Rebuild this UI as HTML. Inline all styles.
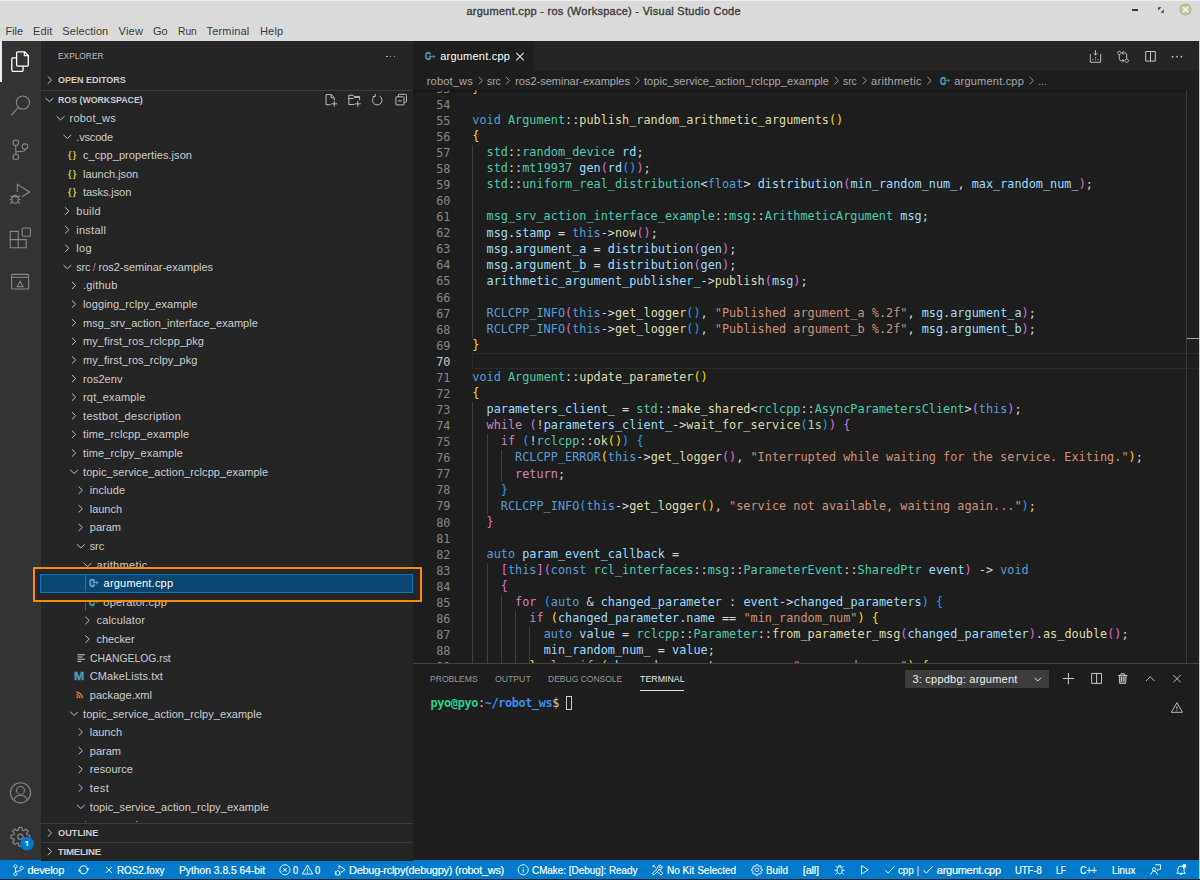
<!DOCTYPE html>
<html lang="en"><head><meta charset="utf-8"><title>argument.cpp - ros (Workspace) - Visual Studio Code</title>
<style>
html,body{margin:0;padding:0;}
body{width:1200px;height:880px;position:relative;overflow:hidden;background:#1e1e1e;
 font-family:"Liberation Sans",sans-serif;font-size:11px;color:#ccc;}
.a{position:absolute;display:block;}
.t{position:absolute;white-space:pre;display:block;}
.c{position:absolute;left:0;white-space:pre;display:block;font-family:"DejaVu Sans Mono","Liberation Mono",monospace;}
svg{overflow:visible}
</style></head><body>
<div class="a" style="left:0.00px;top:0.00px;width:1200.00px;height:41.30px;background:#dadada;"></div>
<div class="a" style="left:0.00px;top:0.00px;width:1200.00px;height:1.00px;background:#ececec;"></div>
<span class="t" style="top:3.30px;line-height:16px;font-size:11px;color:#3d3d3d;left:466.40px;letter-spacing:0.271px;-webkit-text-stroke:0.35px #3d3d3d;">argument.cpp - ros (Workspace) - Visual Studio Code</span>
<span class="t" style="top:22.90px;line-height:16px;font-size:11px;color:#3a3a3a;left:5.50px;letter-spacing:-0.059px;">File</span>
<span class="t" style="top:22.90px;line-height:16px;font-size:11px;color:#3a3a3a;left:33.00px;letter-spacing:0.133px;">Edit</span>
<span class="t" style="top:22.90px;line-height:16px;font-size:11px;color:#3a3a3a;left:62.30px;letter-spacing:0.082px;">Selection</span>
<span class="t" style="top:22.90px;line-height:16px;font-size:11px;color:#3a3a3a;left:118.60px;letter-spacing:0.211px;">View</span>
<span class="t" style="top:22.90px;line-height:16px;font-size:11px;color:#3a3a3a;left:153.00px;letter-spacing:-0.094px;">Go</span>
<span class="t" style="top:22.90px;line-height:16px;font-size:11px;color:#3a3a3a;left:177.80px;transform:scaleX(0.9313);transform-origin:0 50%;">Run</span>
<span class="t" style="top:22.90px;line-height:16px;font-size:11px;color:#3a3a3a;left:206.50px;letter-spacing:0.178px;">Terminal</span>
<span class="t" style="top:22.90px;line-height:16px;font-size:11px;color:#3a3a3a;left:260.00px;letter-spacing:0.169px;">Help</span>
<div class="a" style="left:1131.90px;top:9.00px;width:5.80px;height:1.90px;background:#3a3a3a;"></div>
<svg class="a" style="left:1157.50px;top:6.50px;" width="6.00" height="6.00" viewBox="0 0 6 6"><path d="M0.2 0.2h3.2L0.2 3.4zM5.8 5.8H2.6l3.2-3.2z" fill="#3a3a3a"/></svg>
<svg class="a" style="left:1179.00px;top:3.30px;" width="13.00" height="13.00" viewBox="0 0 13 13"><circle cx="6.5" cy="6.5" r="6.0" fill="#b4b98c"/><circle cx="6.5" cy="6.5" r="4.6" fill="#c3caa4"/><path d="M4.3 4.3l4.4 4.4M8.7 4.3l-4.4 4.4" stroke="#f4f4f4" stroke-width="1.7" stroke-linecap="round"/></svg>
<div class="a" style="left:0.00px;top:41.30px;width:40.80px;height:819.30px;background:#333333;"></div>
<div class="a" style="left:40.80px;top:41.30px;width:372.40px;height:819.30px;background:#252526;"></div>
<div class="a" style="left:413.20px;top:41.30px;width:786.80px;height:29.40px;background:#252526;"></div>
<div class="a" style="left:413.20px;top:41.30px;width:120.60px;height:29.40px;background:#1e1e1e;"></div>
<div class="a" style="left:0.00px;top:41.30px;width:1.90px;height:40.30px;background:#ececec;"></div>
<div class="a" style="left:1198.70px;top:41.30px;width:1.30px;height:838.00px;background:#cbcbcb;"></div>
<div class="a" style="left:0.00px;top:860.35px;width:1198.70px;height:18.55px;background:#007acc;"></div>
<div class="a" style="left:0.00px;top:878.90px;width:1198.70px;height:1.10px;background:#1f1f1f;"></div>
<span class="t" style="top:48.40px;line-height:16px;font-size:9.6px;color:#bbbbbb;left:57.80px;transform:scaleX(0.8706);transform-origin:0 50%;">EXPLORER</span>
<div class="a" style="left:386.30px;top:55.60px;width:1.50px;height:1.50px;background:#c5c5c5;border-radius:1px;"></div>
<div class="a" style="left:389.90px;top:55.60px;width:1.50px;height:1.50px;background:#c5c5c5;border-radius:1px;"></div>
<div class="a" style="left:393.50px;top:55.60px;width:1.50px;height:1.50px;background:#c5c5c5;border-radius:1px;"></div>
<span class="t" style="top:72.10px;line-height:16px;font-size:9.7px;color:#cccccc;left:57.80px;font-weight:700;transform:scaleX(0.9270);transform-origin:0 50%;">OPEN EDITORS</span>
<div class="a" style="left:40.80px;top:89.70px;width:372.40px;height:0.90px;background:#3c3c3d;"></div>
<span class="t" style="top:91.80px;line-height:16px;font-size:9.7px;color:#cccccc;left:57.80px;font-weight:700;transform:scaleX(0.9062);transform-origin:0 50%;">ROS (WORKSPACE)</span>
<div class="a" style="left:40.8px;top:108.5px;width:372.4px;height:713.9px;overflow:hidden">
<div class="a" style="left:-40.8px;top:-108.5px;width:1200px;height:880px">
<svg class="a" style="left:0;top:0" width="1200" height="880" viewBox="0 0 1200 880">
<path d="M56.70 116.30L60.60 119.90L64.50 116.30" fill="none" stroke="#bdbdbd" stroke-width="1.0"/>
<path d="M63.46 134.91L67.36 138.51L71.26 134.91" fill="none" stroke="#bdbdbd" stroke-width="1.0"/>
<path d="M65.11 207.35L68.91 211.05L65.11 214.75" fill="none" stroke="#bdbdbd" stroke-width="1.0"/>
<path d="M65.11 225.96L68.91 229.66L65.11 233.36" fill="none" stroke="#bdbdbd" stroke-width="1.0"/>
<path d="M65.11 244.57L68.91 248.27L65.11 251.97" fill="none" stroke="#bdbdbd" stroke-width="1.0"/>
<path d="M63.46 265.18L67.36 268.78L71.26 265.18" fill="none" stroke="#bdbdbd" stroke-width="1.0"/>
<path d="M71.87 281.79L75.67 285.49L71.87 289.19" fill="none" stroke="#bdbdbd" stroke-width="1.0"/>
<path d="M71.87 300.40L75.67 304.10L71.87 307.80" fill="none" stroke="#bdbdbd" stroke-width="1.0"/>
<path d="M71.87 319.01L75.67 322.71L71.87 326.41" fill="none" stroke="#bdbdbd" stroke-width="1.0"/>
<path d="M71.87 337.62L75.67 341.32L71.87 345.02" fill="none" stroke="#bdbdbd" stroke-width="1.0"/>
<path d="M71.87 356.23L75.67 359.93L71.87 363.63" fill="none" stroke="#bdbdbd" stroke-width="1.0"/>
<path d="M71.87 374.84L75.67 378.54L71.87 382.24" fill="none" stroke="#bdbdbd" stroke-width="1.0"/>
<path d="M71.87 393.45L75.67 397.15L71.87 400.85" fill="none" stroke="#bdbdbd" stroke-width="1.0"/>
<path d="M71.87 412.06L75.67 415.76L71.87 419.46" fill="none" stroke="#bdbdbd" stroke-width="1.0"/>
<path d="M71.87 430.67L75.67 434.37L71.87 438.07" fill="none" stroke="#bdbdbd" stroke-width="1.0"/>
<path d="M71.87 449.28L75.67 452.98L71.87 456.68" fill="none" stroke="#bdbdbd" stroke-width="1.0"/>
<path d="M70.22 469.89L74.12 473.49L78.02 469.89" fill="none" stroke="#bdbdbd" stroke-width="1.0"/>
<path d="M78.63 486.50L82.43 490.20L78.63 493.90" fill="none" stroke="#bdbdbd" stroke-width="1.0"/>
<path d="M78.63 505.11L82.43 508.81L78.63 512.51" fill="none" stroke="#bdbdbd" stroke-width="1.0"/>
<path d="M78.63 523.72L82.43 527.42L78.63 531.12" fill="none" stroke="#bdbdbd" stroke-width="1.0"/>
<path d="M76.98 544.33L80.88 547.93L84.78 544.33" fill="none" stroke="#bdbdbd" stroke-width="1.0"/>
<path d="M83.74 562.94L87.64 566.54L91.54 562.94" fill="none" stroke="#bdbdbd" stroke-width="1.0"/>
<path d="M85.39 616.77L89.19 620.47L85.39 624.17" fill="none" stroke="#bdbdbd" stroke-width="1.0"/>
<path d="M85.39 635.38L89.19 639.08L85.39 642.78" fill="none" stroke="#bdbdbd" stroke-width="1.0"/>
<path d="M70.22 711.82L74.12 715.42L78.02 711.82" fill="none" stroke="#bdbdbd" stroke-width="1.0"/>
<path d="M78.63 728.43L82.43 732.13L78.63 735.83" fill="none" stroke="#bdbdbd" stroke-width="1.0"/>
<path d="M78.63 747.04L82.43 750.74L78.63 754.44" fill="none" stroke="#bdbdbd" stroke-width="1.0"/>
<path d="M78.63 765.65L82.43 769.35L78.63 773.05" fill="none" stroke="#bdbdbd" stroke-width="1.0"/>
<path d="M78.63 784.26L82.43 787.96L78.63 791.66" fill="none" stroke="#bdbdbd" stroke-width="1.0"/>
<path d="M76.98 804.87L80.88 808.47L84.78 804.87" fill="none" stroke="#bdbdbd" stroke-width="1.0"/>
<path d="M85.39 821.48L89.19 825.18L85.39 828.88" fill="none" stroke="#bdbdbd" stroke-width="1.0"/>
</svg>
<span class="t" style="top:110.00px;line-height:16px;font-size:11px;color:#cccccc;left:69.50px;letter-spacing:0.232px;">robot_ws</span>
<span class="t" style="top:128.61px;line-height:16px;font-size:11px;color:#cccccc;left:76.26px;letter-spacing:-0.169px;">.vscode</span>
<span class="t" style="top:147.22px;line-height:16px;font-size:11px;color:#cccccc;left:83.02px;letter-spacing:0.065px;">c_cpp_properties.json</span>
<span class="t" style="top:165.83px;line-height:16px;font-size:11px;color:#cccccc;left:83.02px;letter-spacing:-0.043px;">launch.json</span>
<span class="t" style="top:184.44px;line-height:16px;font-size:11px;color:#cccccc;left:83.02px;letter-spacing:-0.074px;">tasks.json</span>
<span class="t" style="top:203.05px;line-height:16px;font-size:11px;color:#cccccc;left:76.26px;letter-spacing:0.258px;">build</span>
<span class="t" style="top:221.66px;line-height:16px;font-size:11px;color:#cccccc;left:76.26px;letter-spacing:0.259px;">install</span>
<span class="t" style="top:240.27px;line-height:16px;font-size:11px;color:#cccccc;left:76.26px;letter-spacing:0.284px;">log</span>
<span class="t" style="top:258.88px;line-height:16px;font-size:11px;color:#cccccc;left:76.26px;letter-spacing:-0.224px;">src</span>
<span class="t" style="top:258.88px;line-height:16px;font-size:11px;color:#8a8a8a;left:92.76px;">/</span>
<span class="t" style="top:258.88px;line-height:16px;font-size:11px;color:#cccccc;left:98.56px;letter-spacing:-0.024px;">ros2-seminar-examples</span>
<span class="t" style="top:277.49px;line-height:16px;font-size:11px;color:#cccccc;left:83.02px;letter-spacing:0.207px;">.github</span>
<span class="t" style="top:296.10px;line-height:16px;font-size:11px;color:#cccccc;left:83.02px;letter-spacing:0.094px;">logging_rclpy_example</span>
<span class="t" style="top:314.71px;line-height:16px;font-size:11px;color:#cccccc;left:83.02px;letter-spacing:0.060px;">msg_srv_action_interface_example</span>
<span class="t" style="top:333.32px;line-height:16px;font-size:11px;color:#cccccc;left:83.02px;letter-spacing:0.077px;">my_first_ros_rclcpp_pkg</span>
<span class="t" style="top:351.93px;line-height:16px;font-size:11px;color:#cccccc;left:83.02px;letter-spacing:0.063px;">my_first_ros_rclpy_pkg</span>
<span class="t" style="top:370.54px;line-height:16px;font-size:11px;color:#cccccc;left:83.02px;letter-spacing:0.048px;">ros2env</span>
<span class="t" style="top:389.15px;line-height:16px;font-size:11px;color:#cccccc;left:83.02px;letter-spacing:0.176px;">rqt_example</span>
<span class="t" style="top:407.76px;line-height:16px;font-size:11px;color:#cccccc;left:83.02px;letter-spacing:0.307px;">testbot_description</span>
<span class="t" style="top:426.37px;line-height:16px;font-size:11px;color:#cccccc;left:83.02px;letter-spacing:0.118px;">time_rclcpp_example</span>
<span class="t" style="top:444.98px;line-height:16px;font-size:11px;color:#cccccc;left:83.02px;letter-spacing:0.120px;">time_rclpy_example</span>
<span class="t" style="top:463.59px;line-height:16px;font-size:11px;color:#cccccc;left:83.02px;letter-spacing:0.070px;">topic_service_action_rclcpp_example</span>
<span class="t" style="top:482.20px;line-height:16px;font-size:11px;color:#cccccc;left:89.78px;letter-spacing:0.080px;">include</span>
<span class="t" style="top:500.81px;line-height:16px;font-size:11px;color:#cccccc;left:89.78px;letter-spacing:-0.034px;">launch</span>
<span class="t" style="top:519.42px;line-height:16px;font-size:11px;color:#cccccc;left:89.78px;letter-spacing:0.006px;">param</span>
<span class="t" style="top:538.03px;line-height:16px;font-size:11px;color:#cccccc;left:89.78px;letter-spacing:-0.151px;">src</span>
<span class="t" style="top:556.64px;line-height:16px;font-size:11px;color:#cccccc;left:96.54px;letter-spacing:0.327px;">arithmetic</span>
<span class="t" style="top:593.86px;line-height:16px;font-size:11px;color:#cccccc;left:103.30px;letter-spacing:0.212px;">operator.cpp</span>
<span class="t" style="top:612.47px;line-height:16px;font-size:11px;color:#cccccc;left:96.54px;letter-spacing:0.138px;">calculator</span>
<span class="t" style="top:631.08px;line-height:16px;font-size:11px;color:#cccccc;left:96.54px;letter-spacing:-0.082px;">checker</span>
<span class="t" style="top:649.69px;line-height:16px;font-size:11px;color:#cccccc;left:89.78px;transform:scaleX(0.9432);transform-origin:0 50%;">CHANGELOG.rst</span>
<span class="t" style="top:668.30px;line-height:16px;font-size:11px;color:#cccccc;left:89.78px;letter-spacing:0.077px;">CMakeLists.txt</span>
<span class="t" style="top:686.91px;line-height:16px;font-size:11px;color:#cccccc;left:89.78px;letter-spacing:0.041px;">package.xml</span>
<span class="t" style="top:705.52px;line-height:16px;font-size:11px;color:#cccccc;left:83.02px;letter-spacing:0.067px;">topic_service_action_rclpy_example</span>
<span class="t" style="top:724.13px;line-height:16px;font-size:11px;color:#cccccc;left:89.78px;letter-spacing:-0.034px;">launch</span>
<span class="t" style="top:742.74px;line-height:16px;font-size:11px;color:#cccccc;left:89.78px;letter-spacing:0.006px;">param</span>
<span class="t" style="top:761.35px;line-height:16px;font-size:11px;color:#cccccc;left:89.78px;letter-spacing:0.053px;">resource</span>
<span class="t" style="top:779.96px;line-height:16px;font-size:11px;color:#cccccc;left:89.78px;letter-spacing:0.421px;">test</span>
<span class="t" style="top:798.57px;line-height:16px;font-size:11px;color:#cccccc;left:89.78px;letter-spacing:0.074px;">topic_service_action_rclpy_example</span>
<span class="t" style="top:817.18px;line-height:16px;font-size:11px;color:#cccccc;left:96.54px;transform:scaleX(0.9420);transform-origin:0 50%;">__pycache__</span>
</div></div>
<div class="a" style="left:40.80px;top:822.40px;width:372.40px;height:38.20px;background:#252526;"></div>
<div class="a" style="left:40.80px;top:822.60px;width:372.40px;height:0.90px;background:#3c3c3d;"></div>
<span class="t" style="top:825.00px;line-height:16px;font-size:9.7px;color:#cccccc;left:57.80px;font-weight:700;transform:scaleX(0.9479);transform-origin:0 50%;">OUTLINE</span>
<div class="a" style="left:40.80px;top:841.60px;width:372.40px;height:0.90px;background:#3c3c3d;"></div>
<span class="t" style="top:843.50px;line-height:16px;font-size:9.7px;color:#cccccc;left:57.80px;font-weight:700;letter-spacing:-0.252px;">TIMELINE</span>
<svg class="a" style="left:0;top:0" width="1200" height="880" viewBox="0 0 1200 880">
<path d="M47.75 76.40L51.55 80.10L47.75 83.80" fill="none" stroke="#bdbdbd" stroke-width="1.0"/>
<path d="M45.60 98.10L49.50 101.70L53.40 98.10" fill="none" stroke="#bdbdbd" stroke-width="1.0"/>
<path d="M47.75 829.30L51.55 833.00L47.75 836.70" fill="none" stroke="#bdbdbd" stroke-width="1.0"/>
<path d="M47.75 847.80L51.55 851.50L47.75 855.20" fill="none" stroke="#bdbdbd" stroke-width="1.0"/>
</svg>
<span class="t" style="top:48.00px;line-height:16px;font-size:11px;color:#ffffff;left:440.20px;letter-spacing:0.228px;">argument.cpp</span>
<span class="t" style="top:72.80px;line-height:16px;font-size:11px;color:#a9a9a9;left:426.70px;letter-spacing:0.207px;">robot_ws</span>
<span class="t" style="top:72.80px;line-height:16px;font-size:11px;color:#a9a9a9;left:487.00px;transform:scaleX(0.9338);transform-origin:0 50%;">src</span>
<span class="t" style="top:72.80px;line-height:16px;font-size:11px;color:#a9a9a9;left:515.20px;letter-spacing:-0.007px;">ros2-seminar-examples</span>
<span class="t" style="top:72.80px;line-height:16px;font-size:11px;color:#a9a9a9;left:644.00px;letter-spacing:0.062px;">topic_service_action_rclcpp_example</span>
<span class="t" style="top:72.80px;line-height:16px;font-size:11px;color:#a9a9a9;left:843.30px;transform:scaleX(0.9338);transform-origin:0 50%;">src</span>
<span class="t" style="top:72.80px;line-height:16px;font-size:11px;color:#a9a9a9;left:871.00px;letter-spacing:0.301px;">arithmetic</span>
<span class="t" style="top:72.80px;line-height:16px;font-size:11px;color:#a9a9a9;left:954.30px;letter-spacing:0.203px;">argument.cpp</span>
<span class="t" style="top:72.80px;line-height:16px;font-size:11px;color:#a9a9a9;left:1038.00px;transform:scaleX(0.8182);transform-origin:0 50%;">…</span>
<svg class="a" style="left:0;top:0" width="1200" height="880" viewBox="0 0 1200 880">
<path d="M478.6 76.9L482.4 80.6L478.6 84.3" fill="none" stroke="#a0a0a0" stroke-width="0.9"/>
<path d="M505.9 76.9L509.7 80.6L505.9 84.3" fill="none" stroke="#a0a0a0" stroke-width="0.9"/>
<path d="M635.6 76.9L639.4 80.6L635.6 84.3" fill="none" stroke="#a0a0a0" stroke-width="0.9"/>
<path d="M834.6 76.9L838.4 80.6L834.6 84.3" fill="none" stroke="#a0a0a0" stroke-width="0.9"/>
<path d="M862.6 76.9L866.4 80.6L862.6 84.3" fill="none" stroke="#a0a0a0" stroke-width="0.9"/>
<path d="M927.3 76.9L931.1 80.6L927.3 84.3" fill="none" stroke="#a0a0a0" stroke-width="0.9"/>
<path d="M1029.6 76.9L1033.4 80.6L1029.6 84.3" fill="none" stroke="#a0a0a0" stroke-width="0.9"/>
</svg>
<div class="a" style="left:413.2px;top:89.9px;width:785.4px;height:573.1px;overflow:hidden;background:#1e1e1e">
<div class="a" style="left:-413.2px;top:-89.9px;width:1200px;height:880px">
<div class="a" style="left:472.30px;top:352.82px;width:726.40px;height:16.67px;box-sizing:border-box;border:1.3px solid #2b2b2b;border-right:0;"></div>
<div class="a" style="left:472.40px;top:144.94px;width:0.85px;height:192.82px;background:#404040;"></div>
<div class="a" style="left:472.40px;top:402.02px;width:0.85px;height:273.16px;background:#404040;"></div>
<div class="a" style="left:486.67px;top:434.16px;width:0.85px;height:80.34px;background:#404040;"></div>
<div class="a" style="left:500.93px;top:450.23px;width:0.85px;height:32.14px;background:#404040;"></div>
<div class="a" style="left:486.67px;top:562.70px;width:0.85px;height:112.48px;background:#404040;"></div>
<div class="a" style="left:500.93px;top:594.84px;width:0.85px;height:80.34px;background:#404040;"></div>
<div class="a" style="left:515.20px;top:610.91px;width:0.85px;height:64.27px;background:#404040;"></div>
<div class="a" style="left:529.46px;top:626.98px;width:0.85px;height:48.20px;background:#404040;"></div>
<span class="c" style="left:436.2px;top:80.66px;line-height:16.068px;font-size:11.83px;color:#858585">53</span>
<span class="c k0" style="left:472.3px;top:79.91px"><i class="xb1">}</i></span>
<span class="c" style="left:436.2px;top:96.73px;line-height:16.068px;font-size:11.83px;color:#858585">54</span>
<span class="c" style="left:436.2px;top:112.80px;line-height:16.068px;font-size:11.83px;color:#858585">55</span>
<span class="c k0" style="left:472.3px;top:112.05px"><i class="xk">void</i> <i class="xt">Argument</i>::<i class="xf">publish_random_arithmetic_arguments</i><i class="xb1">()</i></span>
<span class="c" style="left:436.2px;top:128.87px;line-height:16.068px;font-size:11.83px;color:#858585">56</span>
<span class="c k0" style="left:472.3px;top:128.12px"><i class="xb1">{</i></span>
<span class="c" style="left:436.2px;top:144.94px;line-height:16.068px;font-size:11.83px;color:#858585">57</span>
<span class="c k0" style="left:472.3px;top:144.19px">  <i class="xt">std</i>::<i class="xt">random_device</i> <i class="xv">rd</i>;</span>
<span class="c" style="left:436.2px;top:161.00px;line-height:16.068px;font-size:11.83px;color:#858585">58</span>
<span class="c k0" style="left:472.3px;top:160.25px">  <i class="xt">std</i>::<i class="xt">mt19937</i> <i class="xv">gen</i><i class="xb2">(</i><i class="xv">rd</i><i class="xb3">()</i><i class="xb2">)</i>;</span>
<span class="c" style="left:436.2px;top:177.07px;line-height:16.068px;font-size:11.83px;color:#858585">59</span>
<span class="c k0" style="left:472.3px;top:176.32px">  <i class="xt">std</i>::<i class="xt">uniform_real_distribution</i>&lt;<i class="xk">float</i>&gt; <i class="xv">distribution</i><i class="xb2">(</i><i class="xv">min_random_num_</i>, <i class="xv">max_random_num_</i><i class="xb2">)</i>;</span>
<span class="c" style="left:436.2px;top:193.14px;line-height:16.068px;font-size:11.83px;color:#858585">60</span>
<span class="c" style="left:436.2px;top:209.21px;line-height:16.068px;font-size:11.83px;color:#858585">61</span>
<span class="c k0" style="left:472.3px;top:208.46px">  <i class="xt">msg_srv_action_interface_example</i>::<i class="xt">msg</i>::<i class="xt">ArithmeticArgument</i> <i class="xv">msg</i>;</span>
<span class="c" style="left:436.2px;top:225.28px;line-height:16.068px;font-size:11.83px;color:#858585">62</span>
<span class="c k0" style="left:472.3px;top:224.53px">  <i class="xv">msg</i>.<i class="xv">stamp</i> = <i class="xk">this</i>-&gt;<i class="xf">now</i><i class="xb2">()</i>;</span>
<span class="c" style="left:436.2px;top:241.34px;line-height:16.068px;font-size:11.83px;color:#858585">63</span>
<span class="c k0" style="left:472.3px;top:240.59px">  <i class="xv">msg</i>.<i class="xv">argument_a</i> = <i class="xv">distribution</i><i class="xb2">(</i><i class="xv">gen</i><i class="xb2">)</i>;</span>
<span class="c" style="left:436.2px;top:257.41px;line-height:16.068px;font-size:11.83px;color:#858585">64</span>
<span class="c k0" style="left:472.3px;top:256.66px">  <i class="xv">msg</i>.<i class="xv">argument_b</i> = <i class="xv">distribution</i><i class="xb2">(</i><i class="xv">gen</i><i class="xb2">)</i>;</span>
<span class="c" style="left:436.2px;top:273.48px;line-height:16.068px;font-size:11.83px;color:#858585">65</span>
<span class="c k0" style="left:472.3px;top:272.73px">  <i class="xv">arithmetic_argument_publisher_</i>-&gt;<i class="xf">publish</i><i class="xb2">(</i><i class="xv">msg</i><i class="xb2">)</i>;</span>
<span class="c" style="left:436.2px;top:289.55px;line-height:16.068px;font-size:11.83px;color:#858585">66</span>
<span class="c" style="left:436.2px;top:305.62px;line-height:16.068px;font-size:11.83px;color:#858585">67</span>
<span class="c k0" style="left:472.3px;top:304.87px">  <i class="xk">RCLCPP_INFO</i><i class="xb2">(</i><i class="xk">this</i>-&gt;<i class="xf">get_logger</i><i class="xb3">()</i>, <i class="xs">"Published argument_a %.2f"</i>, <i class="xv">msg</i>.<i class="xv">argument_a</i><i class="xb2">)</i>;</span>
<span class="c" style="left:436.2px;top:321.68px;line-height:16.068px;font-size:11.83px;color:#858585">68</span>
<span class="c k0" style="left:472.3px;top:320.93px">  <i class="xk">RCLCPP_INFO</i><i class="xb2">(</i><i class="xk">this</i>-&gt;<i class="xf">get_logger</i><i class="xb3">()</i>, <i class="xs">"Published argument_b %.2f"</i>, <i class="xv">msg</i>.<i class="xv">argument_b</i><i class="xb2">)</i>;</span>
<span class="c" style="left:436.2px;top:337.75px;line-height:16.068px;font-size:11.83px;color:#858585">69</span>
<span class="c k0" style="left:472.3px;top:337.00px"><i class="xb1">}</i></span>
<span class="c" style="left:436.2px;top:353.82px;line-height:16.068px;font-size:11.83px;color:#c6c6c6">70</span>
<span class="c" style="left:436.2px;top:369.89px;line-height:16.068px;font-size:11.83px;color:#858585">71</span>
<span class="c k0" style="left:472.3px;top:369.14px"><i class="xk">void</i> <i class="xt">Argument</i>::<i class="xf">update_parameter</i><i class="xb1">()</i></span>
<span class="c" style="left:436.2px;top:385.96px;line-height:16.068px;font-size:11.83px;color:#858585">72</span>
<span class="c k0" style="left:472.3px;top:385.21px"><i class="xb1">{</i></span>
<span class="c" style="left:436.2px;top:402.02px;line-height:16.068px;font-size:11.83px;color:#858585">73</span>
<span class="c k0" style="left:472.3px;top:401.27px">  <i class="xv">parameters_client_</i> = <i class="xt">std</i>::<i class="xf">make_shared</i>&lt;<i class="xt">rclcpp</i>::<i class="xt">AsyncParametersClient</i>&gt;<i class="xb2">(</i><i class="xk">this</i><i class="xb2">)</i>;</span>
<span class="c" style="left:436.2px;top:418.09px;line-height:16.068px;font-size:11.83px;color:#858585">74</span>
<span class="c k0" style="left:472.3px;top:417.34px">  <i class="xc">while</i> <i class="xb2">(</i>!<i class="xv">parameters_client_</i>-&gt;<i class="xf">wait_for_service</i><i class="xb3">(</i><i class="xn">1s</i><i class="xb3">)</i><i class="xb2">)</i> <i class="xb2">{</i></span>
<span class="c" style="left:436.2px;top:434.16px;line-height:16.068px;font-size:11.83px;color:#858585">75</span>
<span class="c k0" style="left:472.3px;top:433.41px">    <i class="xc">if</i> <i class="xb3">(</i>!<i class="xt">rclcpp</i>::<i class="xf">ok</i><i class="xb1">()</i><i class="xb3">)</i> <i class="xb3">{</i></span>
<span class="c" style="left:436.2px;top:450.23px;line-height:16.068px;font-size:11.83px;color:#858585">76</span>
<span class="c k0" style="left:472.3px;top:449.48px">      <i class="xk">RCLCPP_ERROR</i><i class="xb1">(</i><i class="xk">this</i>-&gt;<i class="xf">get_logger</i><i class="xb2">()</i>, <i class="xs">"Interrupted while waiting for the service. Exiting."</i><i class="xb1">)</i>;</span>
<span class="c" style="left:436.2px;top:466.30px;line-height:16.068px;font-size:11.83px;color:#858585">77</span>
<span class="c k0" style="left:472.3px;top:465.55px">      <i class="xc">return</i>;</span>
<span class="c" style="left:436.2px;top:482.36px;line-height:16.068px;font-size:11.83px;color:#858585">78</span>
<span class="c k0" style="left:472.3px;top:481.61px">    <i class="xb3">}</i></span>
<span class="c" style="left:436.2px;top:498.43px;line-height:16.068px;font-size:11.83px;color:#858585">79</span>
<span class="c k0" style="left:472.3px;top:497.68px">    <i class="xk">RCLCPP_INFO</i><i class="xb3">(</i><i class="xk">this</i>-&gt;<i class="xf">get_logger</i><i class="xb1">()</i>, <i class="xs">"service not available, waiting again..."</i><i class="xb3">)</i>;</span>
<span class="c" style="left:436.2px;top:514.50px;line-height:16.068px;font-size:11.83px;color:#858585">80</span>
<span class="c k0" style="left:472.3px;top:513.75px">  <i class="xb2">}</i></span>
<span class="c" style="left:436.2px;top:530.57px;line-height:16.068px;font-size:11.83px;color:#858585">81</span>
<span class="c" style="left:436.2px;top:546.64px;line-height:16.068px;font-size:11.83px;color:#858585">82</span>
<span class="c k0" style="left:472.3px;top:545.89px">  <i class="xk">auto</i> <i class="xv">param_event_callback</i> =</span>
<span class="c" style="left:436.2px;top:562.70px;line-height:16.068px;font-size:11.83px;color:#858585">83</span>
<span class="c k0" style="left:472.3px;top:561.95px">    <i class="xb2">[</i><i class="xk">this</i><i class="xb2">]</i><i class="xb2">(</i><i class="xk">const</i> <i class="xt">rcl_interfaces</i>::<i class="xt">msg</i>::<i class="xt">ParameterEvent</i>::<i class="xt">SharedPtr</i> <i class="xv">event</i><i class="xb2">)</i> -&gt; <i class="xk">void</i></span>
<span class="c" style="left:436.2px;top:578.77px;line-height:16.068px;font-size:11.83px;color:#858585">84</span>
<span class="c k0" style="left:472.3px;top:578.02px">    <i class="xb2">{</i></span>
<span class="c" style="left:436.2px;top:594.84px;line-height:16.068px;font-size:11.83px;color:#858585">85</span>
<span class="c k0" style="left:472.3px;top:594.09px">      <i class="xc">for</i> <i class="xb3">(</i><i class="xk">auto</i> &amp; <i class="xv">changed_parameter</i> : <i class="xv">event</i>-&gt;<i class="xv">changed_parameters</i><i class="xb3">)</i> <i class="xb3">{</i></span>
<span class="c" style="left:436.2px;top:610.91px;line-height:16.068px;font-size:11.83px;color:#858585">86</span>
<span class="c k0" style="left:472.3px;top:610.16px">        <i class="xc">if</i> <i class="xb1">(</i><i class="xv">changed_parameter</i>.<i class="xv">name</i> == <i class="xs">"min_random_num"</i><i class="xb1">)</i> <i class="xb1">{</i></span>
<span class="c" style="left:436.2px;top:626.98px;line-height:16.068px;font-size:11.83px;color:#858585">87</span>
<span class="c k0" style="left:472.3px;top:626.23px">          <i class="xk">auto</i> <i class="xv">value</i> = <i class="xt">rclcpp</i>::<i class="xt">Parameter</i>::<i class="xf">from_parameter_msg</i><i class="xb2">(</i><i class="xv">changed_parameter</i><i class="xb2">)</i>.<i class="xf">as_double</i><i class="xb2">()</i>;</span>
<span class="c" style="left:436.2px;top:643.04px;line-height:16.068px;font-size:11.83px;color:#858585">88</span>
<span class="c k0" style="left:472.3px;top:642.29px">          <i class="xv">min_random_num_</i> = <i class="xv">value</i>;</span>
<span class="c" style="left:436.2px;top:659.11px;line-height:16.068px;font-size:11.83px;color:#858585">89</span>
<span class="c k0" style="left:472.3px;top:658.36px">        <i class="xb1">}</i> <i class="xc">else</i> <i class="xc">if</i> <i class="xb1">(</i><i class="xv">changed_parameter</i>.<i class="xv">name</i> == <i class="xs">"max_random_num"</i><i class="xb1">)</i> <i class="xb1">{</i></span>
<div class="a" style="left:413.20px;top:89.90px;width:773.00px;height:3.00px;background:linear-gradient(#00000070,#00000000);"></div>
<div class="a" style="left:1186.20px;top:89.90px;width:0.90px;height:573.10px;background:#3a3a3a;"></div>
<div class="a" style="left:1187.30px;top:337.60px;width:11.30px;height:1.50px;background:#a8a8a8;"></div>
</div></div>
<style>.k0{color:#d4d4d4;font-size:11.83px;line-height:16.068px;letter-spacing:0.0114px;}.k0 i{font-style:normal}.xk{color:#569cd6}.xt{color:#4ec9b0}.xf{color:#dcdcaa}.xv{color:#9cdcfe}.xs{color:#ce9178}.xc{color:#c586c0}.xn{color:#b5cea8}.xb1{color:#ffd700}.xb2{color:#da70d6}.xb3{color:#179fff}</style>
<div class="a" style="left:413.20px;top:662.90px;width:785.40px;height:1.20px;background:#414141;"></div>
<span class="t" style="top:670.60px;line-height:16px;font-size:9.8px;color:#969696;left:430.00px;transform:scaleX(0.8760);transform-origin:0 50%;">PROBLEMS</span>
<span class="t" style="top:670.60px;line-height:16px;font-size:9.8px;color:#969696;left:495.00px;transform:scaleX(0.8863);transform-origin:0 50%;">OUTPUT</span>
<span class="t" style="top:670.60px;line-height:16px;font-size:9.8px;color:#969696;left:547.70px;transform:scaleX(0.8692);transform-origin:0 50%;">DEBUG CONSOLE</span>
<span class="t" style="top:670.60px;line-height:16px;font-size:9.8px;color:#e7e7e7;left:639.70px;transform:scaleX(0.9002);transform-origin:0 50%;">TERMINAL</span>
<div class="a" style="left:639.70px;top:690.30px;width:44.80px;height:0.90px;background:#e0e0e0;"></div>
<div class="a" style="left:905.00px;top:669.80px;width:143.80px;height:17.80px;background:#3c3c3c;"></div>
<span class="t" style="top:670.60px;line-height:16px;font-size:11px;color:#f0f0f0;left:912.50px;letter-spacing:0.215px;">3: cppdbg: argument</span>
<span class="c" style="left:430.6px;top:695.0px;line-height:16px;font-size:11.83px;letter-spacing:-0.361px;color:#cccccc"><b style="color:#23d18b">pyo@pyo</b>:<b style="color:#3b8eea">~/robot_ws</b>$ </span>
<div class="a" style="left:565.90px;top:696.30px;width:6.40px;height:13.50px;box-sizing:border-box;border:0.9px solid #cccccc;"></div>
<span class="t" style="top:861.60px;line-height:16px;font-size:11px;color:#ffffff;left:27.50px;letter-spacing:-0.292px;-webkit-text-stroke:0.18px #fff;">develop</span>
<span class="t" style="top:861.60px;line-height:16px;font-size:11px;color:#ffffff;left:117.00px;transform:scaleX(0.8931);transform-origin:0 50%;-webkit-text-stroke:0.18px #fff;">ROS2.foxy</span>
<span class="t" style="top:861.60px;line-height:16px;font-size:11px;color:#ffffff;left:179.00px;transform:scaleX(0.9335);transform-origin:0 50%;-webkit-text-stroke:0.18px #fff;">Python 3.8.5 64-bit</span>
<span class="t" style="top:861.60px;line-height:16px;font-size:11px;color:#ffffff;left:293.30px;transform:scaleX(0.8490);transform-origin:0 50%;-webkit-text-stroke:0.18px #fff;">0</span>
<span class="t" style="top:861.60px;line-height:16px;font-size:11px;color:#ffffff;left:315.30px;transform:scaleX(0.8490);transform-origin:0 50%;-webkit-text-stroke:0.18px #fff;">0</span>
<span class="t" style="top:861.60px;line-height:16px;font-size:11px;color:#ffffff;left:349.00px;letter-spacing:-0.286px;-webkit-text-stroke:0.18px #fff;">Debug-rclpy(debugpy) (robot_ws)</span>
<span class="t" style="top:861.60px;line-height:16px;font-size:11px;color:#ffffff;left:532.30px;transform:scaleX(0.8987);transform-origin:0 50%;-webkit-text-stroke:0.18px #fff;">CMake: [Debug]: Ready</span>
<span class="t" style="top:861.60px;line-height:16px;font-size:11px;color:#ffffff;left:666.80px;transform:scaleX(0.9126);transform-origin:0 50%;-webkit-text-stroke:0.18px #fff;">No Kit Selected</span>
<span class="t" style="top:861.60px;line-height:16px;font-size:11px;color:#ffffff;left:765.80px;transform:scaleX(0.8991);transform-origin:0 50%;-webkit-text-stroke:0.18px #fff;">Build</span>
<span class="t" style="top:861.60px;line-height:16px;font-size:11px;color:#ffffff;left:802.80px;letter-spacing:-0.185px;-webkit-text-stroke:0.18px #fff;">[all]</span>
<span class="t" style="top:861.60px;line-height:16px;font-size:11px;color:#ffffff;left:898.30px;transform:scaleX(0.8845);transform-origin:0 50%;-webkit-text-stroke:0.18px #fff;">cpp</span>
<span class="t" style="top:861.60px;line-height:16px;font-size:11px;color:#ffffff;left:916.60px;transform:scaleX(0.6295);transform-origin:0 50%;-webkit-text-stroke:0.18px #fff;">|</span>
<span class="t" style="top:861.60px;line-height:16px;font-size:11px;color:#ffffff;left:936.80px;letter-spacing:-0.272px;-webkit-text-stroke:0.18px #fff;">argument.cpp</span>
<span class="t" style="top:861.60px;line-height:16px;font-size:11px;color:#ffffff;left:1015.00px;transform:scaleX(0.8597);transform-origin:0 50%;-webkit-text-stroke:0.18px #fff;">UTF-8</span>
<span class="t" style="top:861.60px;line-height:16px;font-size:11px;color:#ffffff;left:1056.00px;transform:scaleX(0.7630);transform-origin:0 50%;-webkit-text-stroke:0.18px #fff;">LF</span>
<span class="t" style="top:861.60px;line-height:16px;font-size:11px;color:#ffffff;left:1080.00px;transform:scaleX(0.8078);transform-origin:0 50%;-webkit-text-stroke:0.18px #fff;">C++</span>
<span class="t" style="top:861.60px;line-height:16px;font-size:11px;color:#ffffff;left:1111.80px;transform:scaleX(0.8898);transform-origin:0 50%;-webkit-text-stroke:0.18px #fff;">Linux</span>
<svg class="a" style="left:0;top:0" width="1200" height="880" viewBox="0 0 1200 880">
<g fill="none" stroke="#ffffff" stroke-width="1.3" stroke-linejoin="round"><path d="M17.6 51.8H24.6L28.3 55.5V65.1A1 1 0 0 1 27.3 66.1H17.6A1 1 0 0 1 16.6 65.1V52.8A1 1 0 0 1 17.6 51.8Z"/><path d="M24.4 52V55.7H28.1"/><path d="M16.4 57.9H12.8A1 1 0 0 0 11.8 58.9V70.3A1 1 0 0 0 12.8 71.3H22.1A1 1 0 0 0 23.1 70.3V66.3"/></g>
<g fill="none" stroke="#858585" stroke-width="1.12"><circle cx="22.9" cy="102.6" r="6.6"/><path d="M18.2 107.6L11.2 115.4"/><circle cx="15.8" cy="142.8" r="2.75"/><circle cx="15.8" cy="157" r="2.75"/><circle cx="25" cy="146.6" r="2.75"/><path d="M15.8 145.6V154.2M25 149.4C25 151.6 22.6 151.5 16.4 151.7"/><path d="M17.3 192V184.3L29.5 192L22 196.8"/><ellipse cx="15.1" cy="199.3" rx="3.2" ry="4"/><path d="M12 196.6H18.2M11.9 197.4L10.3 195.6M18.3 197.4L19.9 195.6M11.9 199.6H9.9M18.3 199.6H20.3M12.2 201.8L10.4 203.6M18 201.8L19.8 203.6"/><path d="M10.2 231.4H18.2V247.8H10.2ZM18.2 239.6H26.2V247.8H18.2M10.2 239.6H18.2"/><rect x="22.2" y="228" width="8.2" height="8.2" rx="1"/><rect x="11.6" y="274.4" width="17" height="14.6" rx="0.8"/><path d="M11.6 277.3H28.6"/><path d="M20.1 281.4L23.1 286.6H17.1Z"/><circle cx="20.5" cy="792.8" r="10.1"/><circle cx="20.5" cy="790.4" r="3.9"/><path d="M13.6 800.2C15 796.4 17.6 795.3 20.5 795.3C23.4 795.3 26 796.4 27.4 800.2"/></g>
<path d="M18.89 827.42L21.91 827.42L22.44 830.21L23.62 830.70L25.96 829.10L28.10 831.24L26.50 833.58L26.99 834.76L29.78 835.29L29.78 838.31L26.99 838.84L26.50 840.02L28.10 842.36L25.96 844.50L23.62 842.90L22.44 843.39L21.91 846.18L18.89 846.18L18.36 843.39L17.18 842.90L14.84 844.50L12.70 842.36L14.30 840.02L13.81 838.84L11.02 838.31L11.02 835.29L13.81 834.76L14.30 833.58L12.70 831.24L14.84 829.10L17.18 830.70L18.36 830.21Z" fill="none" stroke="#858585" stroke-width="1.2" stroke-linejoin="round"/>
<circle cx="20.4" cy="836.8" r="2.6" fill="none" stroke="#858585" stroke-width="1.2"/>
<circle cx="27" cy="843.6" r="6.9" fill="#007acc"/>
<g transform="translate(323.85 93.25) scale(0.8438)"><path d="M8.2 13.6H2.6V1.6H8.8L12.4 5.2V8.2M8.6 1.8V5.4H12.2" fill="none" stroke="#c5c5c5" stroke-width="1.09" stroke-linejoin="round"/><path d="M12.3 9.1V16M8.85 12.55H15.75" fill="none" stroke="#c5c5c5" stroke-width="1.09" stroke-linejoin="round"/></g>
<g transform="translate(347.45 93.25) scale(0.8438)"><path d="M8.2 13.4H1.6V2.4H6.6L7.8 3.8H14.4V8.2M1.6 6.2H6.8L8 4.9H14.4" fill="none" stroke="#c5c5c5" stroke-width="1.09" stroke-linejoin="round"/><path d="M12.3 9.1V16M8.85 12.55H15.75" fill="none" stroke="#c5c5c5" stroke-width="1.09" stroke-linejoin="round"/></g>
<g transform="translate(370.45 93.25) scale(0.8438)"><path d="M5.2 3.4A5.6 5.6 0 1 0 10.8 3.4" fill="none" stroke="#c5c5c5" stroke-width="1.09" stroke-linejoin="round"/><path d="M5.8 0.8V3.8H2.8" fill="none" stroke="#c5c5c5" stroke-width="1.09" stroke-linejoin="round"/></g>
<g transform="translate(394.60 93.00) scale(0.8250)"><path d="M4.6 4.2V2.6A1 1 0 0 1 5.6 1.6H13.4A1 1 0 0 1 14.4 2.6V10.4A1 1 0 0 1 13.4 11.4H11.8" fill="none" stroke="#c5c5c5" stroke-width="1.12" stroke-linejoin="round"/><path d="M2.6 4.6H10.4A1 1 0 0 1 11.4 5.6V13.4A1 1 0 0 1 10.4 14.4H2.6A1 1 0 0 1 1.6 13.4V5.6A1 1 0 0 1 2.6 4.6ZM4.2 9.5H8.8" fill="none" stroke="#c5c5c5" stroke-width="1.12" stroke-linejoin="round"/></g>
<g transform="translate(513.25 49.85) scale(0.8438)"><path d="M3.6 3.6L12.4 12.4M12.4 3.6L3.6 12.4" fill="none" stroke="#e8e8e8" stroke-width="1.24" stroke-linejoin="round"/></g>
<g transform="translate(1088.75 49.65) scale(0.8438)"><path d="M8 0.6V6.4M5.7 4.2L8 6.5L10.3 4.2" fill="none" stroke="#c5c5c5" stroke-width="1.09" stroke-linejoin="round"/><path d="M1.9 5.2V15H14.1V5.2" fill="none" stroke="#c5c5c5" stroke-width="1.09" stroke-linejoin="round"/><path d="M7.4 8.6h1.2v1.2H7.4zM4.4 11.4h1.2v1.2H4.4zM7.4 11.4h1.2v1.2H7.4zM10.4 11.4h1.2v1.2H10.4z" fill="#c5c5c5"/></g>
<g transform="translate(1116.25 50.05) scale(0.8438)"><path d="M3.6 1.4A2 2 0 1 1 3.59 1.4ZM12.4 10.6A2 2 0 1 1 12.39 10.6Z" fill="none" stroke="#c5c5c5" stroke-width="1.09" stroke-linejoin="round"/><path d="M3.6 5.4V10.2A2.4 2.4 0 0 0 6 12.6H9M7.2 10.6L9.2 12.6L7.2 14.6M12.4 10.6V5.8A2.4 2.4 0 0 0 10 3.4H7M8.8 1.4L6.8 3.4L8.8 5.4" fill="none" stroke="#c5c5c5" stroke-width="1.09" stroke-linejoin="round"/></g>
<g transform="translate(1143.50 49.30) scale(0.8750)"><path d="M2.5 2.5H13.5V13.5H2.5ZM8 2.5V13.5" fill="none" stroke="#c5c5c5" stroke-width="1.14" stroke-linejoin="round"/></g>
<circle cx="1172.6" cy="56.7" r="0.85" fill="#c5c5c5"/>
<circle cx="1177.0" cy="56.7" r="0.85" fill="#c5c5c5"/>
<circle cx="1181.4" cy="56.7" r="0.85" fill="#c5c5c5"/>
<g transform="translate(1032.55 674.05) scale(0.6562)"><path d="M3 5.6L8 10.6L13 5.6" fill="none" stroke="#f0f0f0" stroke-width="1.40" stroke-linejoin="round"/></g>
<g transform="translate(1060.60 670.80) scale(0.9750)"><path d="M8 2.2V13.8M2.2 8H13.8" fill="none" stroke="#c5c5c5" stroke-width="1.03" stroke-linejoin="round"/></g>
<g transform="translate(1089.40 671.20) scale(0.9000)"><path d="M2.5 2.5H13.5V13.5H2.5ZM8 2.5V13.5" fill="none" stroke="#c5c5c5" stroke-width="1.11" stroke-linejoin="round"/></g>
<g transform="translate(1115.70 671.40) scale(0.8750)"><path d="M4.2 4.8H11.8L11.3 13.6H4.7Z" fill="#c5c5c5" fill-opacity="0.38"/><path d="M2.6 4.6H13.4M6 4.4V2.7H10V4.4M4.1 4.8L4.6 13.7H11.4L11.9 4.8M6.7 6.4V11.8M9.3 6.4V11.8" fill="none" stroke="#c5c5c5" stroke-width="1.14" stroke-linejoin="round"/></g>
<g transform="translate(1143.45 672.05) scale(0.8438)"><path d="M3 10.6L8 5.6L13 10.6" fill="none" stroke="#c5c5c5" stroke-width="1.09" stroke-linejoin="round"/></g>
<g transform="translate(1170.25 671.95) scale(0.8438)"><path d="M3.6 3.6L12.4 12.4M12.4 3.6L3.6 12.4" fill="none" stroke="#c5c5c5" stroke-width="1.09" stroke-linejoin="round"/></g>
<g transform="translate(1170.15 700.85) scale(0.8438)"><path d="M8 2.2L14.6 13.6H1.4Z" fill="none" stroke="#c5c5c5" stroke-width="1.09" stroke-linejoin="round"/><path d="M8 6.3V10.2M8 11.2V12.3" fill="none" stroke="#c5c5c5" stroke-width="1.09" stroke-linejoin="round"/></g>
<g transform="translate(11.50 863.20) scale(0.8750)"><path d="M4.5 1.8A1.8 1.8 0 1 1 4.49 1.8ZM4.5 10.6A1.8 1.8 0 1 1 4.49 10.6ZM11.5 3.6A1.8 1.8 0 1 1 11.49 3.6Z" fill="none" stroke="#ffffff" stroke-width="1.05" stroke-linejoin="round"/><path d="M4.5 5.4V10.6M11.5 7.2C11.5 9.4 4.5 8.4 4.5 10.6" fill="none" stroke="#ffffff" stroke-width="1.05" stroke-linejoin="round"/></g>
<g transform="translate(77.40 863.60) scale(0.7750)"><path d="M2.9 7.4A5.2 5.2 0 0 1 13.1 6.6M13.1 8.6A5.2 5.2 0 0 1 2.9 9.4" fill="none" stroke="#ffffff" stroke-width="1.19" stroke-linejoin="round"/><path d="M10.9 6.2H15.5L13.2 9.2ZM0.5 9.8H5.1L2.8 6.8Z" fill="#ffffff"/></g>
<g transform="translate(103.40 864.40) scale(0.6875)"><path d="M3.6 3.6L12.4 12.4M12.4 3.6L3.6 12.4" fill="none" stroke="#ffffff" stroke-width="1.34" stroke-linejoin="round"/></g>
<g transform="translate(278.60 863.50) scale(0.7875)"><path d="M8 1.6A6.4 6.4 0 1 1 7.99 1.6Z" fill="none" stroke="#ffffff" stroke-width="1.17" stroke-linejoin="round"/><path d="M5.6 5.6L10.4 10.4M10.4 5.6L5.6 10.4" fill="none" stroke="#ffffff" stroke-width="1.17" stroke-linejoin="round"/></g>
<g transform="translate(301.20 863.30) scale(0.7875)"><path d="M8 2.2L14.6 13.6H1.4Z" fill="none" stroke="#ffffff" stroke-width="1.17" stroke-linejoin="round"/><path d="M8 6.3V10.2M8 11.2V12.3" fill="none" stroke="#ffffff" stroke-width="1.17" stroke-linejoin="round"/></g>
<g transform="translate(334.10 864.00) scale(0.7875)"><path d="M6.2 2L14 7.2L8.6 10.8M6.2 2V6.2" fill="none" stroke="#ffffff" stroke-width="1.17" stroke-linejoin="round"/><path d="M4.6 8.4A2.4 3 0 1 1 4.59 8.4ZM1 9.6L2.4 10.6M1 14L2.4 12.8M0.6 11.7H2.2M8.2 9.6L6.8 10.6M8.2 14L6.8 12.8M8.6 11.7H7" fill="none" stroke="#ffffff" stroke-width="1.17" stroke-linejoin="round"/></g>
<g transform="translate(516.90 863.50) scale(0.7875)"><path d="M8 1.6A6.4 6.4 0 1 1 7.99 1.6Z" fill="none" stroke="#ffffff" stroke-width="1.17" stroke-linejoin="round"/><path d="M8 7.2V11.6M8 4.6V5.8" fill="none" stroke="#ffffff" stroke-width="1.17" stroke-linejoin="round"/></g>
<g transform="translate(651.20 863.50) scale(0.7875)"><path d="M2.2 2.2L6 6M4.4 1.6L1.6 4.4M9.2 6.8L13.8 11.4A1.6 1.6 0 0 1 11.4 13.8L6.8 9.2" fill="none" stroke="#ffffff" stroke-width="1.17" stroke-linejoin="round"/><path d="M13.8 3.6L11.6 5.6L10.4 4.4L12.4 2.2A3 3 0 0 0 8.4 5.8L2.4 11.8A1.4 1.4 0 0 0 4.4 13.8L10.2 7.6A3 3 0 0 0 13.8 3.6Z" fill="none" stroke="#ffffff" stroke-width="1.17" stroke-linejoin="round"/></g>
<g transform="translate(750.70 863.50) scale(0.7875)"><path d="M8 5.7A2.3 2.3 0 1 1 7.99 5.7Z" fill="none" stroke="#ffffff" stroke-width="1.14" stroke-linejoin="round"/><path d="M6.9 1.5H9.1L9.5 3.3L10.6 3.8L12.2 2.8L13.7 4.4L12.7 5.9L13.2 7L15 7.4V9.1L13.2 9.5L12.7 10.6L13.7 12.1L12.2 13.7L10.6 12.7L9.5 13.2L9.1 15H6.9L6.5 13.2L5.4 12.7L3.8 13.7L2.3 12.1L3.3 10.6L2.8 9.5L1 9.1V7.4L2.8 7L3.3 5.9L2.3 4.4L3.8 2.8L5.4 3.8L6.5 3.3Z" fill="none" stroke="#ffffff" stroke-width="1.14" stroke-linejoin="round"/></g>
<g transform="translate(832.80 863.00) scale(0.8500)"><path d="M8 4.4A3 4.2 0 1 1 7.99 4.4ZM5.2 5.4L3.2 3.4M10.8 5.4L12.8 3.4M5 8.6H2M11 8.6H14M5.4 11.2L3.2 13.4M10.6 11.2L12.8 13.4M6.2 4.4A1.8 1.8 0 0 1 9.8 4.4" fill="none" stroke="#ffffff" stroke-width="1.06" stroke-linejoin="round"/></g>
<g transform="translate(858.30 863.50) scale(0.7875)"><path d="M4 2.6L12.6 8L4 13.4Z" fill="none" stroke="#ffffff" stroke-width="1.17" stroke-linejoin="round"/></g>
<g transform="translate(883.80 863.80) scale(0.7500)"><path d="M1.8 8.6L5.8 12.4L14.2 3.4" fill="none" stroke="#ffffff" stroke-width="1.23" stroke-linejoin="round"/></g>
<g transform="translate(922.00 863.80) scale(0.7500)"><path d="M1.8 8.6L5.8 12.4L14.2 3.4" fill="none" stroke="#ffffff" stroke-width="1.23" stroke-linejoin="round"/></g>
<g transform="translate(1149.20 863.50) scale(0.7875)"><path d="M6.2 5.2A2.1 2.1 0 1 1 6.19 5.2ZM1.6 14.4L4.6 9.6H7.8L10.8 14.4" fill="none" stroke="#ffffff" stroke-width="1.17" stroke-linejoin="round"/><path d="M7.6 1.6H14.4V7.4H12.4L10.8 9V7.4H10.2" fill="none" stroke="#ffffff" stroke-width="1.17" stroke-linejoin="round"/></g>
<g transform="translate(1174.70 863.70) scale(0.7875)"><path d="M2.6 12.2H13.4L12 10.2V7A4 4 0 0 0 4 7V10.2ZM6.6 12.4A1.4 1.4 0 0 0 9.4 12.4" fill="none" stroke="#ffffff" stroke-width="1.17" stroke-linejoin="round"/></g>
<circle cx="1184.4" cy="866" r="1.9" fill="#ffffff"/>
</svg>
<span style="position:absolute;line-height:16px;font-weight:700;white-space:pre;color:#519aba;left:425.25px;top:48.45px;font-size:10.8px;-webkit-text-stroke:0.45px #519aba;transform:scaleX(0.78);transform-origin:0 50%">C</span>
<span style="position:absolute;line-height:16px;font-weight:700;white-space:pre;color:#519aba;left:428.85px;top:47.75px;font-size:5.6px;-webkit-text-stroke:0.25px #519aba">+</span>
<span style="position:absolute;line-height:16px;font-weight:700;white-space:pre;color:#519aba;left:431.95px;top:47.75px;font-size:5.6px;-webkit-text-stroke:0.25px #519aba">+</span>
<span style="position:absolute;line-height:16px;font-weight:700;white-space:pre;color:#519aba;left:940.00px;top:73.10px;font-size:10.8px;-webkit-text-stroke:0.45px #519aba;transform:scaleX(0.78);transform-origin:0 50%">C</span>
<span style="position:absolute;line-height:16px;font-weight:700;white-space:pre;color:#519aba;left:943.60px;top:72.40px;font-size:5.6px;-webkit-text-stroke:0.25px #519aba">+</span>
<span style="position:absolute;line-height:16px;font-weight:700;white-space:pre;color:#519aba;left:946.70px;top:72.40px;font-size:5.6px;-webkit-text-stroke:0.25px #519aba">+</span>
<div class="a" style="left:22px;top:839px;width:10px;height:7.1px;overflow:hidden"><span class="t" style="left:2.5px;top:0;line-height:10px;font-size:9px;font-weight:700;color:#fff">1</span></div>
<svg class="a" style="left:0;top:0" width="1200" height="880" viewBox="0 0 1200 880">
<path d="M77.5 654.79H84.9M77.5 657.04H82.5M77.5 659.29H84.9M77.5 661.54H81.5" stroke="#c9cccb" stroke-width="1.1" fill="none"/>
<circle cx="77.3" cy="697.21" r="1.0" fill="#e37933"/>
<path d="M76.3 694.61A3.6 3.6 0 0 1 79.89999999999999 698.21M76.3 692.21A6 6 0 0 1 82.3 698.21" fill="none" stroke="#e37933" stroke-width="1.35"/>
</svg>
<span style="position:absolute;line-height:16px;font-weight:700;white-space:pre;color:#519aba;left:88.60px;top:594.06px;font-size:10.8px;-webkit-text-stroke:0.45px #519aba;transform:scaleX(0.78);transform-origin:0 50%">C</span>
<span style="position:absolute;line-height:16px;font-weight:700;white-space:pre;color:#519aba;left:92.20px;top:593.36px;font-size:5.6px;-webkit-text-stroke:0.25px #519aba">+</span>
<span style="position:absolute;line-height:16px;font-weight:700;white-space:pre;color:#519aba;left:95.30px;top:593.36px;font-size:5.6px;-webkit-text-stroke:0.25px #519aba">+</span>
<span style="position:absolute;line-height:16px;font-weight:700;white-space:pre;color:#519aba;left:74.2px;top:668.00px;font-size:11px;-webkit-text-stroke:0.35px #519aba;transform:scaleX(1.12);transform-origin:0 50%">M</span>
<span class="t" style="top:148.02px;line-height:14px;font-size:9px;color:#cbcb41;left:67.90px;font-weight:700;letter-spacing:1.442px;">{}</span>
<span class="t" style="top:166.63px;line-height:14px;font-size:9px;color:#cbcb41;left:67.90px;font-weight:700;letter-spacing:1.442px;">{}</span>
<span class="t" style="top:185.24px;line-height:14px;font-size:9px;color:#cbcb41;left:67.90px;font-weight:700;letter-spacing:1.442px;">{}</span>
<div class="a" style="left:84.70px;top:574.00px;width:0.90px;height:37.00px;background:#585858;"></div>
<div class="a" style="left:32.80px;top:566.90px;width:389.30px;height:35.00px;box-sizing:border-box;border:2px solid #f98a0a;background:#252526;"></div>
<div class="a" style="left:40.30px;top:573.70px;width:372.80px;height:18.90px;background:#094771;box-sizing:border-box;border:1.2px solid #0a74c6;"></div>
<div class="a" style="left:84.70px;top:574.60px;width:0.90px;height:16.80px;background:#44687f;"></div>
<svg class="a" style="left:0;top:0" width="1200" height="880" viewBox="0 0 1200 880">
</svg>
<span style="position:absolute;line-height:16px;font-weight:700;white-space:pre;color:#62abcb;left:88.60px;top:574.90px;font-size:10.8px;-webkit-text-stroke:0.45px #62abcb;transform:scaleX(0.78);transform-origin:0 50%">C</span>
<span style="position:absolute;line-height:16px;font-weight:700;white-space:pre;color:#62abcb;left:92.20px;top:574.20px;font-size:5.6px;-webkit-text-stroke:0.25px #62abcb">+</span>
<span style="position:absolute;line-height:16px;font-weight:700;white-space:pre;color:#62abcb;left:95.30px;top:574.20px;font-size:5.6px;-webkit-text-stroke:0.25px #62abcb">+</span>
<span class="t" style="top:575.30px;line-height:16px;font-size:11px;color:#ffffff;left:103.60px;letter-spacing:0.195px;">argument.cpp</span>
</body></html>
